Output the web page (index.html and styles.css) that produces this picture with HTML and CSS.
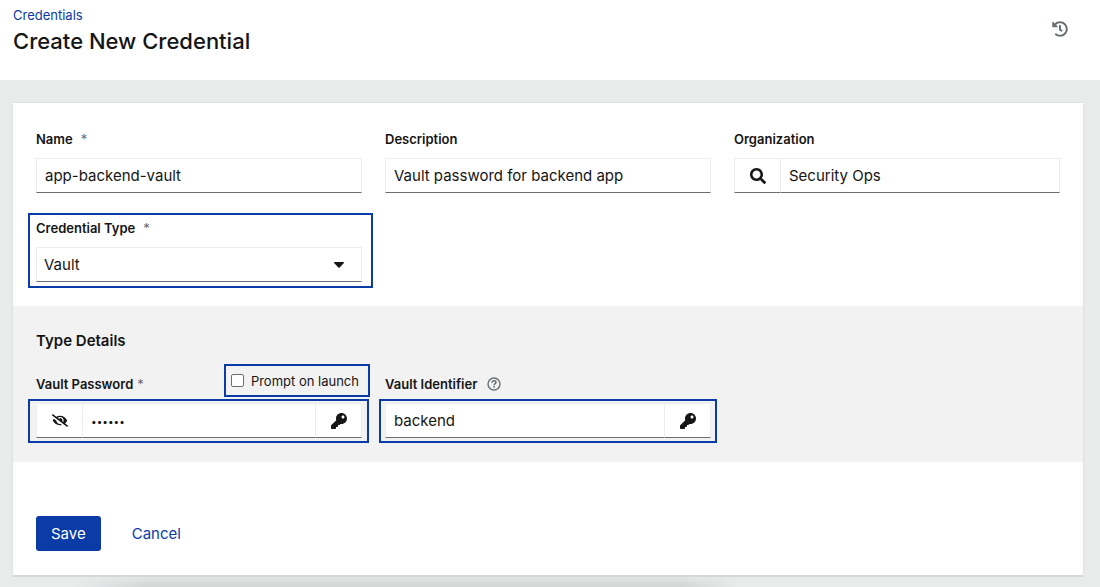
FILE: index.html
```html
<!DOCTYPE html>
<html lang="en">
<head>
<meta charset="utf-8">
<meta name="viewport" content="width=device-width, initial-scale=1">
<title>Create New Credential</title>
<link rel="stylesheet" href="styles.css">
</head>
<body>
<svg class="sprite" aria-hidden="true">
  <symbol id="icon-key" viewBox="0 0 512 512"><path d="M512 176.001C512 273.203 433.202 352 336 352c-11.220 0-22.190-1.062-32.827-3.069l-24.012 27.014A23.999 23.999 0 0 1 261.223 384H224v40c0 13.255-10.745 24-24 24h-40v40c0 13.255-10.745 24-24 24H24c-13.255 0-24-10.745-24-24v-78.059c0-6.365 2.529-12.470 7.029-16.971l161.802-161.802C163.108 213.814 160 195.271 160 176 160 78.798 238.797.001 335.999 0 433.488-.001 512 78.511 512 176.001zM336 128c0 26.510 21.490 48 48 48s48-21.490 48-48-21.490-48-48-48-48 21.490-48 48z"/></symbol>
</svg>
<header class="page-header">
  <div>
    <nav aria-label="Breadcrumb"><a class="breadcrumb" href="#">Credentials</a></nav>
    <h1 class="page-title">Create New Credential</h1>
  </div>
  <button class="history" type="button" aria-label="View activity stream">
    <svg viewBox="0 0 512 512" width="16" height="16" aria-hidden="true"><path d="M504 255.531c.253 136.640-111.180 248.372-247.820 248.468-59.015.042-113.223-20.530-155.822-54.911-11.077-8.940-11.905-25.541-1.839-35.607l11.267-11.267c8.609-8.609 22.353-9.551 31.891-1.984C173.062 425.135 212.781 440 256 440c101.705 0 184-82.311 184-184 0-101.705-82.311-184-184-184-48.814 0-93.149 18.969-126.068 49.932l50.754 50.754c10.080 10.080 2.941 27.314-11.313 27.314H24c-8.837 0-16-7.163-16-16V38.627c0-14.254 17.234-21.393 27.314-11.314l49.372 49.372C129.209 34.136 189.552 8 256 8c136.810 0 247.747 110.780 248 247.531zm-180.912 78.784l9.823-12.630c8.138-10.463 6.253-25.542-4.210-33.679L288 256.349V152c0-13.255-10.745-24-24-24h-16c-13.255 0-24 10.745-24 24v135.651l65.409 50.874c10.463 8.137 25.541 6.253 33.679-4.210z"/></svg>
  </button>
</header>
<main class="page-main">
  <form class="card">
    <div class="section field-grid">
      <div class="field">
        <div class="label-row"><label for="name">Name</label><span class="required required-wide">*</span></div>
        <div class="control"><input class="text-input" id="name" type="text" value="app-backend-vault"></div>
      </div>
      <div class="field">
        <div class="label-row"><label for="description">Description</label></div>
        <div class="control"><input class="text-input" id="description" type="text" value="Vault password for backend app"></div>
      </div>
      <div class="field">
        <div class="label-row"><label for="organization">Organization</label></div>
        <div class="control">
          <button class="addon addon-start" type="button" aria-label="Search organizations">
            <svg viewBox="0 0 512 512" width="16" height="16" aria-hidden="true"><path d="M505 442.700L405.300 343c-4.500-4.500-10.600-7-17-7H372c27.600-35.300 44-79.700 44-128C416 93.100 322.900 0 208 0S0 93.100 0 208s93.100 208 208 208c48.300 0 92.700-16.400 128-44v16.300c0 6.400 2.500 12.500 7 17l99.700 99.700c9.400 9.400 24.600 9.400 33.900 0l28.300-28.300c9.400-9.400 9.400-24.600.1-34zM208 336c-70.700 0-128-57.200-128-128 0-70.700 57.200-128 128-128 70.700 0 128 57.200 128 128 0 70.700-57.200 128-128 128z"/></svg>
          </button>
          <input class="text-input" id="organization" type="text" value="Security Ops">
        </div>
      </div>
      <div class="field highlight highlight-type">
        <div class="label-row"><label for="credential-type">Credential Type</label><span class="required required-wide">*</span></div>
        <div class="control">
          <select class="text-input select" id="credential-type"><option>Vault</option></select>
          <svg class="caret" viewBox="0 0 10 6" width="10" height="6" aria-hidden="true"><path d="M.7 0h8.600q1.200.2.300 1.200L5.700 5.500q-.7.700-1.400 0L.4 1.200Q-.5.200.7 0z"/></svg>
        </div>
      </div>
    </div>
    <section class="section details">
      <h2 class="section-title">Type Details</h2>
      <div class="field-grid">
        <div class="field">
          <div class="label-row">
            <label for="vault-password">Vault Password</label><span class="required">*</span>
            <label class="prompt highlight highlight-prompt"><input class="checkbox" type="checkbox">Prompt on launch</label>
          </div>
          <div class="control highlight highlight-password">
            <button class="addon addon-start" type="button" aria-label="Show password">
              <svg viewBox="0 0 640 512" width="16" height="13" aria-hidden="true"><path d="M320 400c-75.850 0-137.250-58.710-142.900-133.110L72.200 185.820c-13.790 17.300-26.480 35.590-36.720 55.590a32.350 32.350 0 0 0 0 29.190C89.710 376.410 197.070 448 320 448c26.910 0 52.870-4 77.890-10.460L346 397.390a144.130 144.130 0 0 1-26 2.610zm313.820 58.100l-110.550-85.440a331.250 331.250 0 0 0 81.250-102.070 32.350 32.350 0 0 0 0-29.190C550.290 135.590 442.930 64 320 64a308.150 308.150 0 0 0-147.320 37.700L45.460 3.370A16 16 0 0 0 23 6.180L3.370 31.450A16 16 0 0 0 6.180 53.900l588.360 454.730a16 16 0 0 0 22.460-2.810l19.640-25.270a16 16 0 0 0-2.820-22.450zm-183.720-142l-39.300-30.380A94.750 94.750 0 0 0 416 256a94.760 94.760 0 0 0-121.310-92.210A47.650 47.650 0 0 1 304 192a46.640 46.640 0 0 1-1.540 10l-73.610-56.890A142.310 142.310 0 0 1 320 112a143.920 143.920 0 0 1 144 144c0 21.630-5.290 41.790-13.900 60.110z"/></svg>
            </button>
            <input class="text-input password" id="vault-password" type="password" value="secret">
            <button class="addon addon-end" type="button" aria-label="Select password from a secret store"><svg width="16" height="16" aria-hidden="true"><use href="#icon-key"/></svg></button>
          </div>
        </div>
        <div class="field">
          <div class="label-row">
            <label for="vault-identifier">Vault Identifier</label>
            <button class="help" type="button" aria-label="More information about Vault Identifier">
              <svg class="outline-icon" viewBox="0 0 14 14" width="14" height="14" aria-hidden="true"><circle cx="7" cy="7" r="6" stroke-width="1.400"/><path d="M5 5.700C5 4.400 5.900 3.800 7 3.800s2 .7 2 1.700C9 6.800 7.100 6.700 7.100 8.200" stroke-width="1.500"/><path d="M7.100 9.100v1.500" stroke-width="1.600"/></svg>
            </button>
          </div>
          <div class="control highlight highlight-identifier">
            <input class="text-input" id="vault-identifier" type="text" value="backend">
            <button class="addon addon-end" type="button" aria-label="Select identifier from a secret store"><svg width="16" height="16" aria-hidden="true"><use href="#icon-key"/></svg></button>
          </div>
        </div>
      </div>
    </section>
    <div class="section actions">
      <button class="save" type="button">Save</button>
      <button class="cancel" type="button">Cancel</button>
    </div>
  </form>
</main>
</body>
</html>
```
FILE: styles.css
```css
* { box-sizing: border-box; }

body {
  margin: 0;
  min-height: 100vh;
  display: flex;
  flex-direction: column;
  background: #e9ebeb;
  color: #151515;
  font-family: Inter, "Open Sans", sans-serif;
  font-size: 15px;
}

button, input, select { font: inherit; color: inherit; }
button { padding: 0; border: 0; background: none; cursor: pointer; }
svg { display: block; fill: currentColor; }
.sprite { position: absolute; width: 0; height: 0; }
.outline-icon { fill: none; stroke: currentColor; }

.page-header {
  display: flex;
  justify-content: space-between;
  align-items: flex-start;
  padding: 5px 32px 23px 13px;
  background: #fff;
}
.breadcrumb {
  display: block;
  color: #0b3ba7;
  font-size: 13px;
  line-height: 20px;
  text-decoration: none;
}
.page-title {
  margin: 0;
  font-size: 22px;
  font-weight: 500;
  line-height: 32px;
}
.history { margin-top: 16px; color: #6a6e73; }

.page-main {
  position: relative;
  flex: 1;
  padding: 23px 17px 12px 13px;
}
.page-main::after {
  content: "";
  position: absolute;
  left: 7%;
  right: 33%;
  bottom: 0;
  height: 10px;
  background: linear-gradient(to bottom, #e3e5e5, #d3d5d5);
  mask-image: linear-gradient(to right, transparent, #000 10%, #000 92%, transparent);
}
.card {
  position: relative;
  z-index: 1;
  background: #fff;
  box-shadow: 0 2px 0 #d6d8d8, 0 0 2px #cfd1d1;
}
.section { padding: 24px 23px; }
.details { background: #f2f2f2; }
.section-title {
  margin: 0 0 20px;
  font-size: 15px;
  font-weight: 600;
  line-height: 22px;
}
.field-grid {
  display: grid;
  grid-template-columns: repeat(3, minmax(0, 1fr));
  gap: 23px;
}
.label-row {
  display: flex;
  align-items: center;
  height: 24px;
  margin-bottom: 7px;
  font-size: 13px;
  font-weight: 600;
}
.required { margin-left: 4px; color: #6a6e73; font-weight: 400; }
.required-wide { margin-left: 8px; }
.help { margin-left: 10px; color: #6a6e73; }

.control { position: relative; display: flex; height: 35px; }
.text-input {
  flex: 1;
  min-width: 0;
  height: 100%;
  padding: 0 8px;
  border: 1px solid #ededed;
  border-bottom-color: #6a6e73;
  border-radius: 0;
  background: #fff;
}
.select { appearance: none; padding: 0 7px; }
.caret { position: absolute; right: 18px; top: 15px; pointer-events: none; }
.password { font-size: 10px; }
.addon {
  display: grid;
  place-items: center;
  width: 46px;
  border: 1px solid #ededed;
  border-bottom-color: #6a6e73;
  background: #fff;
}
.addon-start { border-right: 0; }
.addon-end { border-left: 0; }

.highlight { position: relative; }
.highlight::after {
  content: "";
  position: absolute;
  border: 2px solid #0b3ba7;
  pointer-events: none;
}
.highlight-type::after { inset: -3px -11px -6px -8px; }
.highlight-password::after { inset: -4px -7px -5px -8px; }
.highlight-identifier::after { inset: -4px -6px -5px; }

.prompt {
  display: flex;
  align-items: center;
  gap: 7px;
  margin: 0 3px 7px auto;
  font-weight: 400;
}
.highlight-prompt::after { inset: -9px -11px -8px -7px; }
.checkbox {
  appearance: none;
  width: 13px;
  height: 13px;
  margin: 0;
  border: 1px solid #6a6e73;
  border-radius: 2px;
  background: #fff;
}

.actions { display: flex; gap: 16px; padding-top: 54px; }
.save, .cancel { height: 35px; padding: 0 15px; }
.save { border-radius: 3px; background: #0b3ba7; color: #fff; }
.cancel { color: #0b3ba7; }
```
